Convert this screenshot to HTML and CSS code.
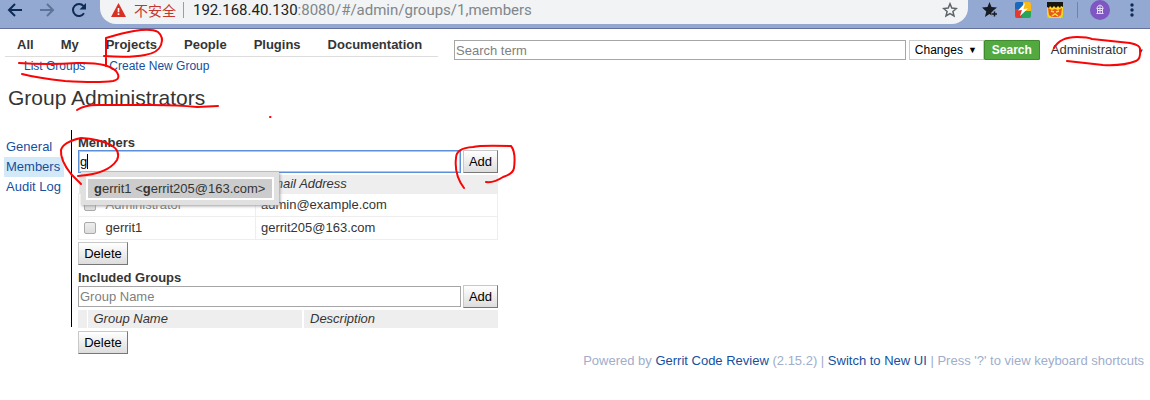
FILE: index.html
```html
<!DOCTYPE html>
<html lang="en">
<head>
<meta charset="utf-8">
<title>Group Administrators</title>
<link rel="stylesheet" href="styles.css">
</head>
<body>
<div class="browser-bar">
  <button class="tool" aria-label="Back"><svg width="16" height="16" viewBox="0 0 16 16" fill="none" stroke="#0c2b57" stroke-width="2"><path d="M15 8H2M8 2L2 8l6 6"/></svg></button>
  <button class="tool" aria-label="Forward"><svg width="16" height="16" viewBox="0 0 16 16" fill="none" stroke="#5f7399" stroke-width="2"><path d="M1 8h13M8 2l6 6-6 6"/></svg></button>
  <button class="tool" aria-label="Reload"><svg width="16" height="16" viewBox="0 0 16 16"><path d="M13 11.300A6 6 0 1 1 12.500 4" fill="none" stroke="#0c2b57" stroke-width="2"/><path d="M15 1v6.500H8.500z" fill="#0c2b57"/></svg></button>
  <div class="address">
    <svg width="15" height="14" viewBox="0 0 15 14"><path d="M7.500 0L15 14H0z" fill="#d93025"/><path d="M6.700 5h1.600v4.200H6.700zM6.700 10.300h1.600V12H6.700z" fill="#fff"/></svg>
    <span class="insecure">不安全</span>
    <span class="address-rule"></span>
    <span class="url"><span class="host">192.168.40.130</span>:8080/#/admin/groups/1,members</span>
    <svg class="star" width="16" height="16" viewBox="0 0 16 16" fill="none" stroke="#606469" stroke-width="1.500"><path d="M8 1.800l1.800 4.300 4.600.4-3.500 3 1.100 4.500L8 11.600 4 14l1.100-4.500-3.500-3 4.600-.4z"/></svg>
  </div>
  <div class="extensions">
    <svg width="17" height="18" viewBox="0 0 17 18"><path d="M7.500 1l2 5 5.500.4-4.200 3.600 1 6-4.300-3-4.600 3L4.300 10.400 0 6.500 5.500 6z" fill="#171b22"/><path d="M12.500 10v6M9.500 13h6" stroke="#93a9d1" stroke-width="4"/><path d="M12.500 10.500v5M10 13h5" stroke="#171b22" stroke-width="1.500"/></svg>
    <svg width="16" height="16" viewBox="0 0 16 16"><path d="M2 0h8v8H0V2q0-2 2-2z" fill="#1769bd"/><path d="M8 0h6q2 0 2 2v7H8z" fill="#f8ba13"/><path d="M0 7h8v9H2q-2 0-2-2z" fill="#e3392f"/><path d="M7 9h9v5q0 2-2 2H7z" fill="#26a65b"/><path d="M10 1L3 8.500l4-.5-2 6 8-7.500-4.500.5z" fill="#fff"/></svg>
    <svg width="16" height="16" viewBox="0 0 16 16"><path d="M0 0h16v16H0z" fill="#ffd426"/><path d="M0 0h16v5l-2-1-1 2-2-2-2 2-2-2-2 2-2-2-1 2-2-1z" fill="#17150c"/><path d="M1 6l4 2 3-1 3 1 4-2-1 7-3 2H5l-3-2z" fill="#e65a20"/><path d="M4 9l3 1M12 9l-3 1M5 14l3-2 3 2" stroke="#ffe03c" stroke-width="1.500" fill="none"/><path d="M0 12l2 4H0zM16 12l-2 4h2z" fill="#a7d629"/></svg>
    <span class="ext-rule"></span>
    <svg width="20" height="20" viewBox="0 0 20 20"><circle cx="10" cy="10" r="10" fill="#7e57c2"/><path d="M7 8q0-2 3-3 3 1 3 3M6.500 8.500h7M7 10.500h6M6.500 13.500h7M7.500 8v5.500M12.500 8v5.500M10 6v8" fill="none" stroke="#e6dcf5"/></svg>
    <svg width="4" height="16" viewBox="0 0 4 16" fill="#0c2b57"><circle cx="2" cy="3" r="1.700"/><circle cx="2" cy="8" r="1.700"/><circle cx="2" cy="13" r="1.700"/></svg>
  </div>
</div>

<header class="header">
  <nav class="menu">
    <div class="tabs"><a href="#">All</a><a href="#">My</a><a href="#">Projects</a><a href="#">People</a><a href="#">Plugins</a><a href="#">Documentation</a></div>
    <div class="submenu"><a href="#">List Groups</a><a href="#">Create New Group</a></div>
  </nav>
  <form class="search">
    <input class="search-text" type="text" placeholder="Search term" aria-label="Search term">
    <div class="select-wrap"><select class="search-kind" aria-label="Search type"><option>Changes</option></select><span class="caret">▼</span></div>
    <button class="search-button" type="button">Search</button>
  </form>
  <a class="account" href="#">Administrator <span class="caret-small">▼</span></a>
</header>

<h1 class="title">Group Administrators</h1>

<div class="body">
  <nav class="side"><a href="#">General</a><a class="active" href="#">Members</a><a href="#">Audit Log</a></nav>
  <main class="content">
    <label class="section" for="member">Members</label>
    <div class="add-row focused">
      <input id="member" type="text" value="g">
      <button class="button" type="button">Add</button>
      <span class="text-cursor"></span>
      <div class="suggest"><div class="suggest-inner"><div class="suggest-item"><b>g</b>errit1 &lt;<b>g</b>errit205@163.com&gt;</div></div></div>
    </div>
    <table class="members">
      <colgroup><col class="col-tick"><col class="col-who"><col></colgroup>
      <thead><tr><th colspan="2"></th><th>Email Address</th></tr></thead>
      <tbody>
        <tr><td class="tick"><input type="checkbox" aria-label="Administrator"></td><td class="who"><a href="#">Administrator</a></td><td>admin@example.com</td></tr>
        <tr><td class="tick"><input type="checkbox" aria-label="gerrit1"></td><td class="who">gerrit1</td><td>gerrit205@163.com</td></tr>
      </tbody>
    </table>
    <button class="button delete" type="button">Delete</button>
    <label class="section included" for="group">Included Groups</label>
    <div class="add-row">
      <input id="group" type="text" placeholder="Group Name">
      <button class="button" type="button">Add</button>
    </div>
    <table class="groups">
      <thead><tr><th class="blank"></th><th class="group-name">Group Name</th><th>Description</th></tr></thead>
    </table>
    <button class="button delete last" type="button">Delete</button>
  </main>
</div>

<footer class="footer">Powered by <a href="#">Gerrit Code Review</a> (2.15.2) | <a href="#">Switch to New UI</a> | Press '?' to view keyboard shortcuts</footer>

<svg class="ink" width="1150" height="400" viewBox="0 0 1150 400" fill="none" stroke="#fa0505" stroke-width="2" stroke-linecap="round" stroke-linejoin="round" aria-hidden="true">
  <path d="M106 66V38Q122 33 134 31Q151 28 158 32Q164 37 161 45Q158 53 145 55Q130 58 104 56"/>
  <path d="M19 63Q48 65 77 63Q107 62 116 71Q122 79 113 81Q98 83 65 81Q38 78 22 74"/>
  <path d="M77 110Q84 105 98 105L152 105Q178 105 197 107L218 106"/>
  <path d="M270 117h.5"/>
  <path d="M78 176Q108 174 117 160Q121 151 111 145Q99 139 81 138Q63 142 61 150Q60 160 71 174L81 184"/>
  <path d="M464 188Q454 175 456 158Q456 148 473 147Q480 145 511 146Q516 152 514 168Q513 174 503 177Q494 183 486 182"/>
  <path d="M1054 48Q1060 37 1077 37Q1088 37 1092 39L1130 43Q1141 45 1140 50Q1141 59 1136 61Q1124 66 1103 65L1067 61"/>
</svg>
</body>
</html>
```
FILE: styles.css
```css
* { box-sizing: border-box; }
body { margin: 0; position: relative; background: #fff; color: #353535; font: 13px/18px "Liberation Sans", Arial, sans-serif; }
a { color: #14509f; text-decoration: none; }
svg { display: block; flex: none; }
input, select, button { font: inherit; margin: 0; }

.browser-bar { display: flex; align-items: flex-start; height: 29px; padding: 0 16px 0 6px; background: #93a9d1; border-bottom: 1px solid #65709c; }
.tool { width: 32px; height: 20px; padding: 2px 0 0; border: 0; background: none; display: flex; justify-content: flex-start; flex: none; }
.tool svg { margin-left: 1px; }
.address { flex: 1; display: flex; align-items: center; height: 24px; padding: 0 10px 4px 11px; margin-left: -2px; background: #f1f3f4; border-radius: 0 0 16px 16px; }
.insecure { margin-left: 8px; color: #c5362b; font: 14px/20px "Noto Sans CJK SC", sans-serif; }
.address-rule { width: 1px; height: 16px; margin: 0 9px 0 7px; background: #9a9da1; }
.url { flex: 1; color: #80868b; font: 15px/20px Roboto, "Noto Sans", sans-serif; white-space: nowrap; }
.host { color: #202124; }
.extensions { display: flex; align-items: center; gap: 16px; height: 20px; margin-left: 14px; }
.ext-rule { width: 1px; height: 16px; margin: 0 -4px 0 -2px; background: #6b83ae; }
.extensions svg:last-child { margin-left: 4px; }

.header { display: flex; align-items: flex-start; padding: 5px 6px 0 5px; }
.menu { width: 433px; flex: none; margin-right: 16px; }
.tabs { display: flex; gap: 27px; padding: 2px 12px; border-bottom: 1px solid #ddd; }
.tabs a { color: #353535; font-weight: bold; }
.submenu { display: flex; gap: 24px; padding-left: 19px; }
.submenu a { font-size: 12px; }
.search { flex: 1; display: flex; padding-top: 6px; }
.search-text { flex: 1; min-width: 0; height: 20px; padding: 0 1px; border: 1px solid #a6a6a6; }
input::placeholder { color: #808080; opacity: 1; }
.select-wrap { position: relative; margin-left: 3px; }
.search-kind { appearance: none; width: 75px; height: 20px; padding: 0 5px; border: 1px solid #ccc; border-radius: 0; background: #fff; color: #000; font-size: 12px; }
.caret { position: absolute; right: 7px; top: 1px; color: #000; font-size: 9px; pointer-events: none; }
.search-button { width: 56px; height: 20px; padding: 0; border: 1px solid #3f8a2f; background: #53a93f; color: #fff; font-weight: bold; font-size: 12px; border-radius: 1px; }
.account { margin: 7px 0 0 11px; color: #353535; white-space: nowrap; }
.caret-small { font-size: 6px; vertical-align: 1px; margin-left: 7px; }

.title { margin: 11px 8px 20px; font-size: 21px; font-weight: normal; line-height: 24px; }
.body { display: flex; align-items: flex-start; }
.side { width: 60px; margin: 7px 0 0 4px; flex: none; }
.side a { display: block; padding-left: 2px; line-height: 20px; white-space: nowrap; }
.side .active { background: #d4e9f7; }
.content { width: 427px; height: 197px; margin-left: 7px; padding: 5px 0 0 6px; border-left: 1px solid #000; }
.section { display: block; font-weight: bold; line-height: 15px; }
.add-row { display: flex; align-items: center; gap: 2px; position: relative; }
.add-row input { flex: 1; min-width: 0; height: 21px; padding: 0 1px; border: 1px solid #a6a6a6; }
.focused input { height: 23px; border: 1px solid #5b8fd9; outline: 1px solid #a9c6f5; outline-offset: -2px; }
.button { width: 35px; height: 23px; padding: 0; border: 1px solid; border-color: #c8c8c8 #777 #777 #c8c8c8; background: linear-gradient(#fff, #ddd); color: #000; font-size: 13px; }
.text-cursor { position: absolute; left: 9px; top: 4px; width: 1px; height: 15px; background: #000; }
.suggest { position: absolute; z-index: 2; left: 3px; top: 22px; width: 198px; padding: 5px; background: #e0e0e0; box-shadow: 1px 1px 3px #999; }
.suggest-inner { padding: 2px; background: #fff; }
.suggest-item { padding-left: 6px; background: #ccc; line-height: 19px; white-space: nowrap; }

table { width: 100%; border-collapse: collapse; table-layout: fixed; }
th { height: 18px; padding: 0 6px; background: #eee; font-style: italic; font-weight: normal; text-align: left; line-height: 18px; }
.members { margin-top: 2px; }
.members th { padding-left: 8px; }
.col-tick { width: 22px; }
.col-who { width: 155px; }
.members td { height: 23px; padding: 0 5px; border: 1px solid #eee; line-height: 18px; }
.members .tick { border-right: 0; }
.members .who { border-left: 0; }
.who a { color: #777; }
.tick input { display: block; width: 12px; height: 12px; appearance: none; border: 1px solid #aaa; border-radius: 2px; background: linear-gradient(#eee, #ddd); }
.delete { display: block; width: 50px; margin-top: 2px; }
.included { margin-top: 5px; }
.groups { margin-top: 2px; }
.groups .blank { width: 9px; padding: 0; border-right: 1px solid #fff; }
.groups .group-name { width: 216px; border-right: 2px solid #fff; }
.last { margin-top: 3px; }
.footer { margin: 25px 6px 0; color: #a0adcc; text-align: right; }
.ink { position: absolute; z-index: 3; left: 0; top: 0; pointer-events: none; }
```
